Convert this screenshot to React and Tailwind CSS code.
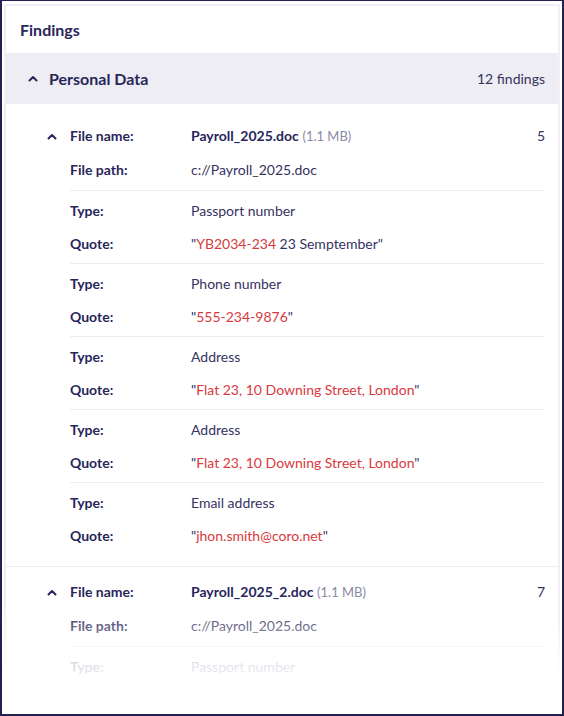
import React from "react";

const NAVY = "text-[#29265a]";

function Chevron({ className = "" }) {
  return (
    <svg width="10" height="7" viewBox="0 0 10 7" className={className} fill="none">
      <path d="M1.5 5.5 L5 2 L8.5 5.5" stroke="#29265a" strokeWidth="2" strokeLinecap="round" strokeLinejoin="round" />
    </svg>
  );
}

function Row({ label, children, right }) {
  return (
    <div className="flex h-[20px] items-center leading-[20px]">
      <div className="w-[121px] shrink-0 font-bold text-[#29265a]">{label}</div>
      <div className="flex-1 text-[#36335f]">{children}</div>
      {right != null && <div className="text-[#36335f]">{right}</div>}
    </div>
  );
}

function Quote({ pre = "", red, post = "" }) {
  return (
    <span>
      <span className="text-[#36335f]">"{pre}</span>
      <span className="text-[#d83a40]">{red}</span>
      <span className="text-[#36335f]">{post}"</span>
    </span>
  );
}

const findings1 = [
  { type: "Passport number", q: { red: "YB2034-234", post: " 23 Semptember" } },
  { type: "Phone number", q: { red: "555-234-9876" } },
  { type: "Address", q: { red: "Flat 23, 10 Downing Street, London" } },
  { type: "Address", q: { red: "Flat 23, 10 Downing Street, London" } },
  { type: "Email address", q: { red: "jhon.smith@coro.net" } },
];

const findings2 = [
  { type: "Passport number", q: { red: "YB2034-234", post: " 23 Semptember" } },
];

function FileBlock({ name, count, items, className = "" }) {
  return (
    <div className={"flex pl-[41px] pr-[13px] " + className}>
      <div className="w-[23px] shrink-0 h-[20px] flex items-center">
        <Chevron />
      </div>
      <div className="flex-1">
        <Row label="File name:" right={count}>
          <span className="font-bold text-[#29265a]">{name}</span>{" "}
          <span className="text-[#8b89a3] text-[13px]">(1.1 MB)</span>
        </Row>
        <div className="mt-[14px] pb-[10px]">
          <Row label="File path:">c://Payroll_2025.doc</Row>
        </div>
        {items.map((it, i) => (
          <div key={i} className="border-t border-[#ececf1] pt-[10px] pb-[9px] flex flex-col gap-[13px]">
            <Row label="Type:">{it.type}</Row>
            <Row label="Quote:">
              <Quote {...it.q} />
            </Row>
          </div>
        ))}
      </div>
    </div>
  );
}

export default function App() {
  return (
    <div
      className="relative w-[564px] h-[716px] overflow-hidden bg-white border-[#231f50] border-l-2 border-r-2 border-b-2 border-t p-[2px] pt-[3px] text-[14px]"
      style={{ fontFamily: "Lato, 'Noto Sans', sans-serif" }}
    >
      <div className="h-[720px] border-2 border-[#efeff5] bg-white">
        <div className={"pl-[14px] pt-[12px] pb-[11px] text-[16px] leading-[24px] font-bold " + NAVY}>
          Findings
        </div>
        <div className="h-[51px] bg-[#eeedf3] flex items-center pl-[22px] pr-[13px]">
          <Chevron />
          <div className={"ml-[11px] flex-1 text-[16px] font-bold " + NAVY}>Personal Data</div>
          <div className="text-[#36335f]">12 findings</div>
        </div>
        <FileBlock
          name="Payroll_2025.doc"
          count="5"
          items={findings1}
          className="pt-[22px] pb-[11px]"
        />
        <div className="border-t border-[#ececf1]" />
        <FileBlock name="Payroll_2025_2.doc" count="7" items={findings2} className="pt-[15px]" />
      </div>
      <div className="absolute left-0 right-0 bottom-0 h-[100px] bg-[linear-gradient(to_bottom,rgba(255,255,255,0.1),rgba(255,255,255,0.85)_50%,#fff_80%)]" />
    </div>
  );
}
